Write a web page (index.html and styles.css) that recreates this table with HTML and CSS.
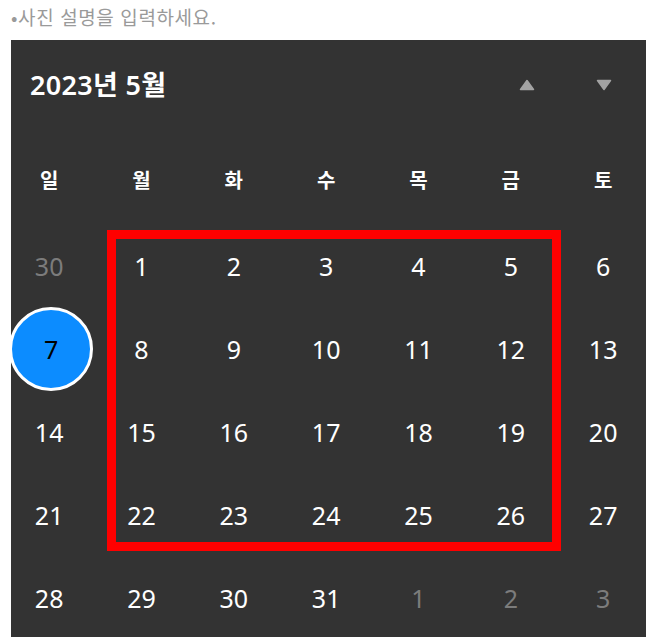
FILE: index.html
```html
<!DOCTYPE html>
<html lang="ko">
<head>
<meta charset="utf-8">
<link rel="stylesheet" href="styles.css">
</head>
<body>
<p class="caption">•사진 설명을 입력하세요.</p>
<div class="panel">
  <div class="header">
    <span class="title">2023년 5월</span>
    <div class="arrows">
      <svg class="arrow" width="16" height="12" viewBox="0 0 16 12"><path d="M8 1.5 L14.5 10.5 L1.5 10.5 Z" fill="#a3a3a3" stroke="#a3a3a3" stroke-width="1.5" stroke-linejoin="round"/></svg>
      <svg class="arrow" width="16" height="12" viewBox="0 0 16 12"><path d="M1.5 1.5 L14.5 1.5 L8 10.5 Z" fill="#a3a3a3" stroke="#a3a3a3" stroke-width="1.5" stroke-linejoin="round"/></svg>
    </div>
  </div>
  <div class="grid">
    <div class="wd">일</div><div class="wd">월</div><div class="wd">화</div><div class="wd">수</div><div class="wd">목</div><div class="wd">금</div><div class="wd">토</div>
  </div>
  <div class="grid days">
    <div class="d out">30</div><div class="d">1</div><div class="d">2</div><div class="d">3</div><div class="d">4</div><div class="d">5</div><div class="d">6</div>
    <div class="d"><span class="today">7</span></div><div class="d">8</div><div class="d">9</div><div class="d">10</div><div class="d">11</div><div class="d">12</div><div class="d">13</div>
    <div class="d">14</div><div class="d">15</div><div class="d">16</div><div class="d">17</div><div class="d">18</div><div class="d">19</div><div class="d">20</div>
    <div class="d">21</div><div class="d">22</div><div class="d">23</div><div class="d">24</div><div class="d">25</div><div class="d">26</div><div class="d">27</div>
    <div class="d">28</div><div class="d">29</div><div class="d">30</div><div class="d">31</div><div class="d out">1</div><div class="d out">2</div><div class="d out">3</div>
  </div>
  <div class="highlight"></div>
</div>
</body>
</html>
```
FILE: styles.css
```css
html, body {
  margin: 0;
  padding: 0;
  background: #ffffff;
}
body {
  width: 646px;
  height: 637px;
  overflow: hidden;
  font-family: "Noto Sans", "Noto Sans CJK KR", sans-serif;
}
.caption {
  margin: 0;
  height: 40px;
  padding-left: 11px;
  font-size: 19px;
  letter-spacing: 0.6px;
  line-height: 34px;
  color: #9a9a9a;
  font-family: "Noto Sans CJK KR", sans-serif;
}
.panel {
  position: relative;
  margin-left: 11px;
  height: 597px;
  background: #333333;
  overflow: hidden;
}
.header {
  height: 90px;
  display: flex;
  align-items: center;
  justify-content: space-between;
  padding-left: 19px;
}
.title {
  color: #ffffff;
  font-size: 27px;
  font-weight: 600;
  letter-spacing: 0.3px;
  line-height: 1;
  margin-top: -2px;
  font-family: "Noto Sans", "Noto Sans CJK KR", sans-serif;
}
.arrows {
  display: flex;
  align-items: center;
  gap: 61px;
  padding-right: 34px;
}
.arrow {
  display: block;
}
.grid {
  display: grid;
  grid-template-columns: repeat(7, 92.33px);
  margin-left: -8px;
}
.wd {
  height: 94px;
  padding-top: 4px;
  box-sizing: border-box;
  display: flex;
  align-items: center;
  justify-content: center;
  color: #ffffff;
  font-size: 20px;
  font-weight: 700;
  font-family: "Noto Sans CJK KR", sans-serif;
}
.d {
  height: 83px;
  display: flex;
  align-items: center;
  justify-content: center;
  color: #ffffff;
  font-size: 25px;
}
.d.out {
  color: #7c7c7c;
}
.today {
  width: 78px;
  height: 78px;
  margin-left: 4px;
  border-radius: 50%;
  background: #0c8cff;
  border: 3px solid #ffffff;
  display: flex;
  align-items: center;
  justify-content: center;
  color: #000000;
}
.highlight {
  position: absolute;
  left: 96px;
  top: 190px;
  width: 454px;
  height: 321px;
  box-sizing: border-box;
  border: 9px solid #ff0000;
  pointer-events: none;
}
```
